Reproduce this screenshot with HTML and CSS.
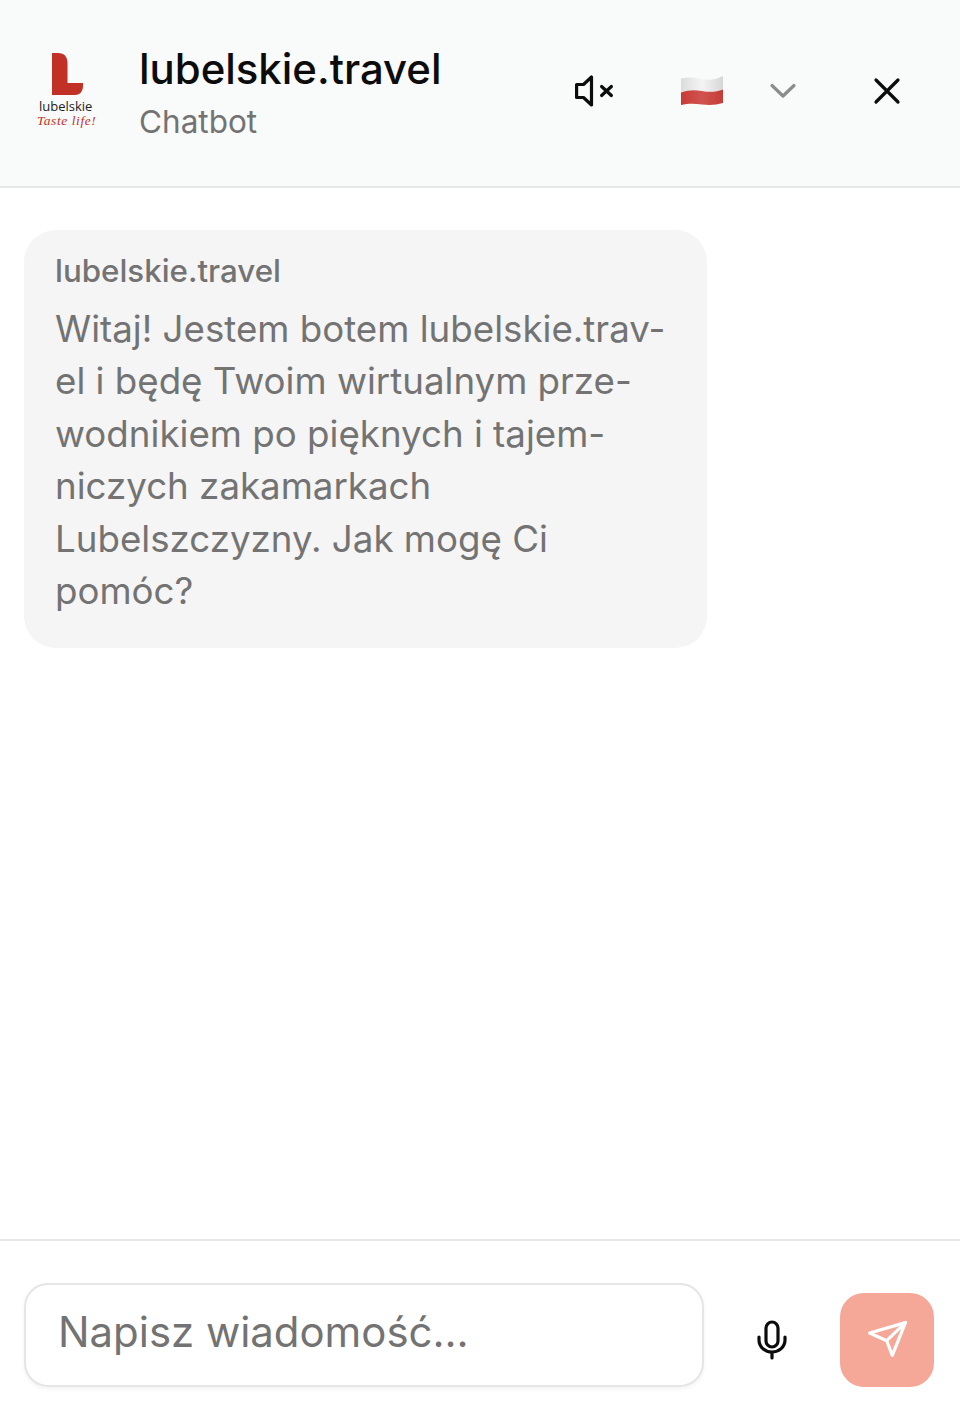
FILE: index.html
```html
<!doctype html>
<html lang="pl">
<head>
    <meta charset="UTF-8">
    <link rel="stylesheet" href="styles.css">
</head>
<body>
    <div class="chat">
        <header class="top">
            <div class="logo">
                <svg class="logo-mark" width="31" height="42" viewBox="0 0 32 42" preserveAspectRatio="none">
                    <path d="M0 0H6C13 0 16 4 16 10V30H32V33C32 38 29 42 24 42H0Z" fill="#c23126"/>
                </svg>
                <span class="logo-name">lubelskie</span>
                <span class="logo-tag">Taste life!</span>
            </div>
            <div class="titles">
                <div class="title">lubelskie.travel</div>
                <div class="subtitle">Chatbot</div>
            </div>
            <svg class="icon-mute" width="44" height="44" viewBox="0 0 44 44" fill="none" stroke="#0c0c0c" stroke-width="3.2" stroke-linecap="round" stroke-linejoin="round">
                <path d="M20.500 8V36L12.500 28.500H5.600V15.500H12.500Z"/>
                <path d="M30.600 17.500L40.400 26.500M40.400 17.500L30.600 26.500"/>
            </svg>
            <svg class="icon-flag" width="44" height="32" viewBox="0 0 44 32">
                <defs>
                    <linearGradient id="flagWhite" x1="0" y1="0" x2="1" y2="0">
                        <stop offset="0" stop-color="#dcdcdc"/>
                        <stop offset="0.5" stop-color="#f4f4f4"/>
                        <stop offset="1" stop-color="#d6d6d6"/>
                    </linearGradient>
                    <linearGradient id="flagRed" x1="0" y1="0" x2="1" y2="0">
                        <stop offset="0" stop-color="#c93a36"/>
                        <stop offset="0.5" stop-color="#d0534f"/>
                        <stop offset="1" stop-color="#c43c38"/>
                    </linearGradient>
                </defs>
                <path d="M1 3.500C8 1.500 16 2.500 22 4C30 6 36 4 43 1V14.500C36 17 30 17.500 22 16C14 14.500 8 15 1 17.500Z" fill="url(#flagWhite)"/>
                <path d="M1 17.500C8 15 14 14.500 22 16C30 17.500 36 17 43 14.500V28C36 30 30 30.500 22 29.500C14 28.500 8 28.500 1 30Z" fill="url(#flagRed)"/>
            </svg>
            <svg class="icon-chevron" width="28" height="28" viewBox="0 0 28 28" fill="none" stroke="#8c8c8c" stroke-width="3.2" stroke-linecap="round" stroke-linejoin="round">
                <path d="M3 8.500L14 19L25 8.500"/>
            </svg>
            <svg class="icon-close" width="30" height="30" viewBox="0 0 30 30" fill="none" stroke="#0c0c0c" stroke-width="3.2" stroke-linecap="round">
                <path d="M4 4L26 26M26 4L4 26"/>
            </svg>
        </header>

        <main class="messages">
            <div class="bubble">
                <div class="sender">lubelskie.travel</div>
                <p class="text">Witaj! Jestem botem lubelskie.trav-<br>el i będę Twoim wirtualnym prze-<br>wodnikiem po pięknych i tajem-<br>niczych zakamarkach<br>Lubelszczyzny. Jak mogę Ci<br>pomóc?</p>
            </div>
        </main>

        <footer class="bottom">
            <div class="field">Napisz wiadomość...</div>
            <svg class="icon-mic" width="32" height="40" viewBox="0 0 32 40" fill="none" stroke="#0c0c0c" stroke-width="3.200" stroke-linecap="round" stroke-linejoin="round">
                <rect x="10" y="2" width="12" height="25" rx="6"/>
                <path d="M3 17V20C3 27 9 32 16 32C23 32 29 27 29 20V17M16 32V38"/>
            </svg>
            <button class="send">
                <svg width="42" height="42" viewBox="0 0 42 42" fill="none" stroke="#fff" stroke-width="3.200" stroke-linecap="round" stroke-linejoin="round">
                    <path d="M39.400 3.600L3.600 14L20.700 21.700L26.300 36.400Z"/>
                    <path d="M39.400 3.600L20.700 21.700"/>
                </svg>
            </button>
        </footer>
    </div>
</body>
</html>
```

FILE: styles.css
```css
* {
    box-sizing: border-box;
}
body {
    margin: 0;
    background-color: #fff;
    font-family: Inter, "Liberation Sans", sans-serif;
}

.chat {
    height: 1420px;
    display: flex;
    flex-direction: column;
}

.top {
    height: 188px;
    background-color: #f9fafa;
    border-bottom: 2px solid #e6e7e7;
    display: flex;
    align-items: center;
    padding: 0 0 4px 36px;
}

.logo {
    width: 103px;
    display: flex;
    flex-direction: column;
    align-items: flex-start;
    margin-top: -2px;
}
.logo-mark {
    margin-left: 16px;
}
.logo-name {
    font-family: "Open Sans", sans-serif;
    font-size: 13px;
    line-height: 15px;
    margin: 4px 0 0 3px;
    color: #222;
}
.logo-tag {
    font-family: "Liberation Serif", serif;
    font-style: italic;
    font-size: 13.400px;
    line-height: 14px;
    letter-spacing: 0.6px;
    margin-left: 1px;
    color: #c23126;
}

.titles {
    width: 432px;
    margin-top: 4px;
}
.title {
    font-size: 41.900px;
    font-weight: 500;
    line-height: 52px;
    margin-top: -1px;
    color: #0c0c0c;
}
.subtitle {
    font-size: 31.500px;
    line-height: 40px;
    margin-top: 7px;
    color: #737373;
}

.icon-mute {
    margin-right: 65px;
}
.icon-flag {
    margin-right: 45px;
}
.icon-chevron {
    margin-right: 75px;
}

.messages {
    flex: 1;
    padding: 42px 24px;
}
.bubble {
    width: 683px;
    height: 418px;
    padding: 20px 32px 20px 31px;
    background-color: #f5f5f5;
    border-radius: 32px;
    color: #737373;
}
.sender {
    font-size: 31.300px;
    font-weight: 500;
    line-height: 42px;
}
.text {
    margin: 11px 0 0 0;
    font-size: 36.700px;
    line-height: 52.400px;
}

.bottom {
    height: 181px;
    border-top: 2px solid #e6e7e7;
    display: flex;
    align-items: flex-start;
    padding: 42px 26px 0 24px;
}
.field {
    width: 680px;
    height: 104px;
    padding: 0 32px;
    border: 2px solid #e5e5e5;
    border-radius: 24px;
    box-shadow: 0 2px 4px rgba(0, 0, 0, 0.05);
    font-size: 41.900px;
    line-height: 94px;
    color: #737373;
}
.icon-mic {
    margin: 37px 0 0 52px;
}
.send {
    width: 94px;
    height: 94px;
    margin: 10px 0 0 52px;
    padding: 0;
    border: 0;
    border-radius: 24px;
    background-color: #f5a897;
    display: flex;
    align-items: center;
    justify-content: center;
}
```
